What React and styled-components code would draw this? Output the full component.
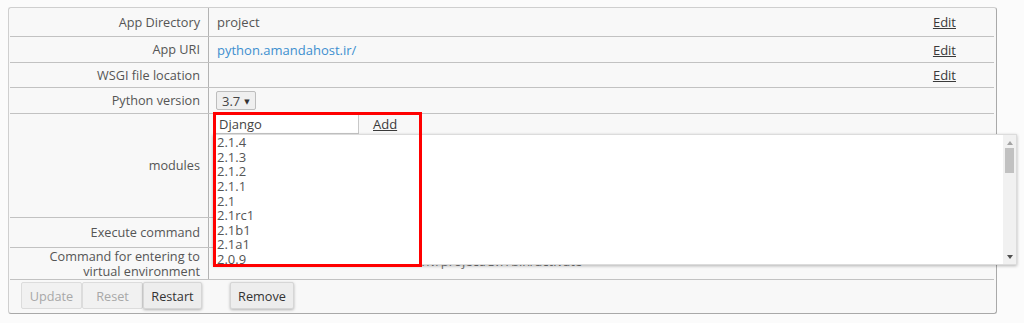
import React from "react";
import styled, { createGlobalStyle } from "styled-components";

const Global = createGlobalStyle`
  html, body { margin: 0; padding: 0; background: #fbfbfb; }
  body { font-family: "Open Sans", "DejaVu Sans", sans-serif; font-size: 13px; color: #555; }
  * { box-sizing: border-box; }
`;

const Panel = styled.div`
  margin: 7px 0 0 8px;
  width: 989px;
  height: 307px;
  background: #f8f8f8;
  border: 1px solid #cfcfcf;
  border-right-color: #a9a9a9;
  border-bottom-color: #a9a9a9;
  border-radius: 3px;
  padding: 0 2px 0 1px;
  display: flex;
  flex-direction: column;
`;

const Row = styled.div`
  display: grid;
  grid-template-columns: 199px 1fr auto;
  height: ${(p) => p.$h}px;
  border-bottom: 1px solid #c2c2c2;
`;

const Label = styled.div`
  border-right: 1px solid #b3b3b3;
  display: flex;
  align-items: center;
  justify-content: flex-end;
  text-align: right;
  padding-right: 8px;
  line-height: 15px;
  font-size: 12.7px;
  color: #555;
`;

const Value = styled.div`
  position: relative;
  display: flex;
  align-items: ${(p) => (p.$top ? "flex-start" : "center")};
  padding-left: ${(p) => (p.$pl ?? 8)}px;
  padding-bottom: ${(p) => (p.$pb ?? 0)}px;
  color: ${(p) => p.$color || "#555"};
  white-space: nowrap;
`;

const EditCell = styled.div`
  display: flex;
  align-items: center;
  padding-right: 38px;
`;

const TextLink = styled.a`
  color: #3a3a3a;
  text-decoration: underline;
  cursor: pointer;
`;

const UriLink = styled.a`
  color: #3d8fcf;
  text-decoration: none;
`;

const SelectBox = styled.div`
  display: inline-flex;
  align-items: center;
  gap: 4px;
  height: 19px;
  padding: 0 5px 0 5px;
  margin-left: -1px;
  background: #efefef;
  border: 1px solid #bdbdbd;
  border-radius: 2px;
  color: #444;
  font-size: 13px;
`;

const Caret = styled.span`
  font-size: 7px;
  color: #333;
  margin-top: 1px;
`;

const ModuleBar = styled.div`
  display: flex;
  align-items: center;
  height: 20px;
  gap: 14px;
`;

const TextInput = styled.div`
  width: 144px;
  height: 20px;
  border: 1px solid #c8c8c8;
  background: #fff;
  padding: 0 3px;
  display: flex;
  align-items: center;
  color: #444;
  font-size: 13px;
`;

const ListBox = styled.div`
  position: absolute;
  left: 4px;
  top: 20px;
  width: 804px;
  height: 131px;
  background: #fff;
  border: 1px solid #dcdcdc;
  box-shadow: 0 1px 3px rgba(0, 0, 0, 0.28);
  display: flex;
  z-index: 2;
`;

const Options = styled.div`
  flex: 1;
  overflow: hidden;
  padding: 0 0 0 3px;
`;

const Option = styled.div`
  height: 14.65px;
  line-height: 14.65px;
  color: #555;
  font-size: 13px;
`;

const ScrollTrack = styled.div`
  width: 13px;
  background: #f1f1f1;
  display: flex;
  flex-direction: column;
  align-items: center;
  padding-top: 6px;
`;

const ArrowUp = styled.div`
  width: 0;
  height: 0;
  border-left: 3px solid transparent;
  border-right: 3px solid transparent;
  border-bottom: 4px solid #a3a3a3;
`;

const ArrowDown = styled.div`
  width: 0;
  height: 0;
  border-left: 3px solid transparent;
  border-right: 3px solid transparent;
  border-top: 4px solid #505050;
  margin-bottom: 5px;
`;

const Thumb = styled.div`
  width: 9px;
  height: 25px;
  margin-top: 3px;
  background: #c1c1c1;
`;

const Spacer = styled.div`
  flex: 1;
`;

const Highlight = styled.div`
  position: absolute;
  left: 4px;
  top: -2px;
  width: 209px;
  height: 155px;
  border: 3px solid #ff0000;
  z-index: 3;
  pointer-events: none;
`;

const ButtonBar = styled.div`
  display: flex;
  align-items: flex-start;
  padding: 2px 0 0 11px;
`;

const Group = styled.div`
  display: flex;
  margin-right: ${(p) => p.$mr || 0}px;
`;

const Button = styled.button`
  width: ${(p) => p.$w}px;
  height: 27px;
  font-family: "Open Sans", sans-serif;
  font-size: 12.7px;
  border-radius: 2px;
  border: 1px solid ${(p) => (p.disabled ? "#dcdcdc" : "#d6d6d6")};
  background: ${(p) => (p.disabled ? "#f1f1f1" : "#ededed")};
  color: ${(p) => (p.disabled ? "#a8a8a8" : "#333")};
  box-shadow: ${(p) => (p.disabled ? "none" : "0 1px 3px rgba(0,0,0,0.28)")};
  padding: 0;
`;

const versions = ["2.1.4", "2.1.3", "2.1.2", "2.1.1", "2.1", "2.1rc1", "2.1b1", "2.1a1", "2.0.9", "2.0.8"];

export default function App() {
  return (
    <>
      <Global />
      <Panel>
        <Row $h={29}>
          <Label>App Directory</Label>
          <Value>project</Value>
          <EditCell><TextLink>Edit</TextLink></EditCell>
        </Row>
        <Row $h={26}>
          <Label>App URI</Label>
          <Value><UriLink>python.amandahost.ir/</UriLink></Value>
          <EditCell><TextLink>Edit</TextLink></EditCell>
        </Row>
        <Row $h={25}>
          <Label>WSGI file location</Label>
          <Value />
          <EditCell><TextLink>Edit</TextLink></EditCell>
        </Row>
        <Row $h={26}>
          <Label>Python version</Label>
          <Value>
            <SelectBox>3.7<Caret>▼</Caret></SelectBox>
          </Value>
          <EditCell />
        </Row>
        <Row $h={104}>
          <Label>modules</Label>
          <Value $top $pl={6}>
            <ModuleBar>
              <TextInput>Django</TextInput>
              <TextLink>Add</TextLink>
            </ModuleBar>
            <ListBox>
              <Options>
                {versions.map((v) => (
                  <Option key={v}>{v}</Option>
                ))}
              </Options>
              <ScrollTrack>
                <ArrowUp />
                <Thumb />
                <Spacer />
                <ArrowDown />
              </ScrollTrack>
            </ListBox>
            <Highlight />
          </Value>
          <EditCell />
        </Row>
        <Row $h={30}>
          <Label>Execute command</Label>
          <Value />
          <EditCell />
        </Row>
        <Row $h={32}>
          <Label>Command for entering to<br />virtual environment</Label>
          <Value $color="#707070" $pb={5}>source /home/amandaho/virtualenv/project/3.7/bin/activate</Value>
          <EditCell />
        </Row>
        <ButtonBar>
          <Group $mr={28}>
            <Button disabled $w={61}>Update</Button>
            <Button disabled $w={61}>Reset</Button>
            <Button $w={59}>Restart</Button>
          </Group>
          <Button $w={64}>Remove</Button>
        </ButtonBar>
      </Panel>
    </>
  );
}
